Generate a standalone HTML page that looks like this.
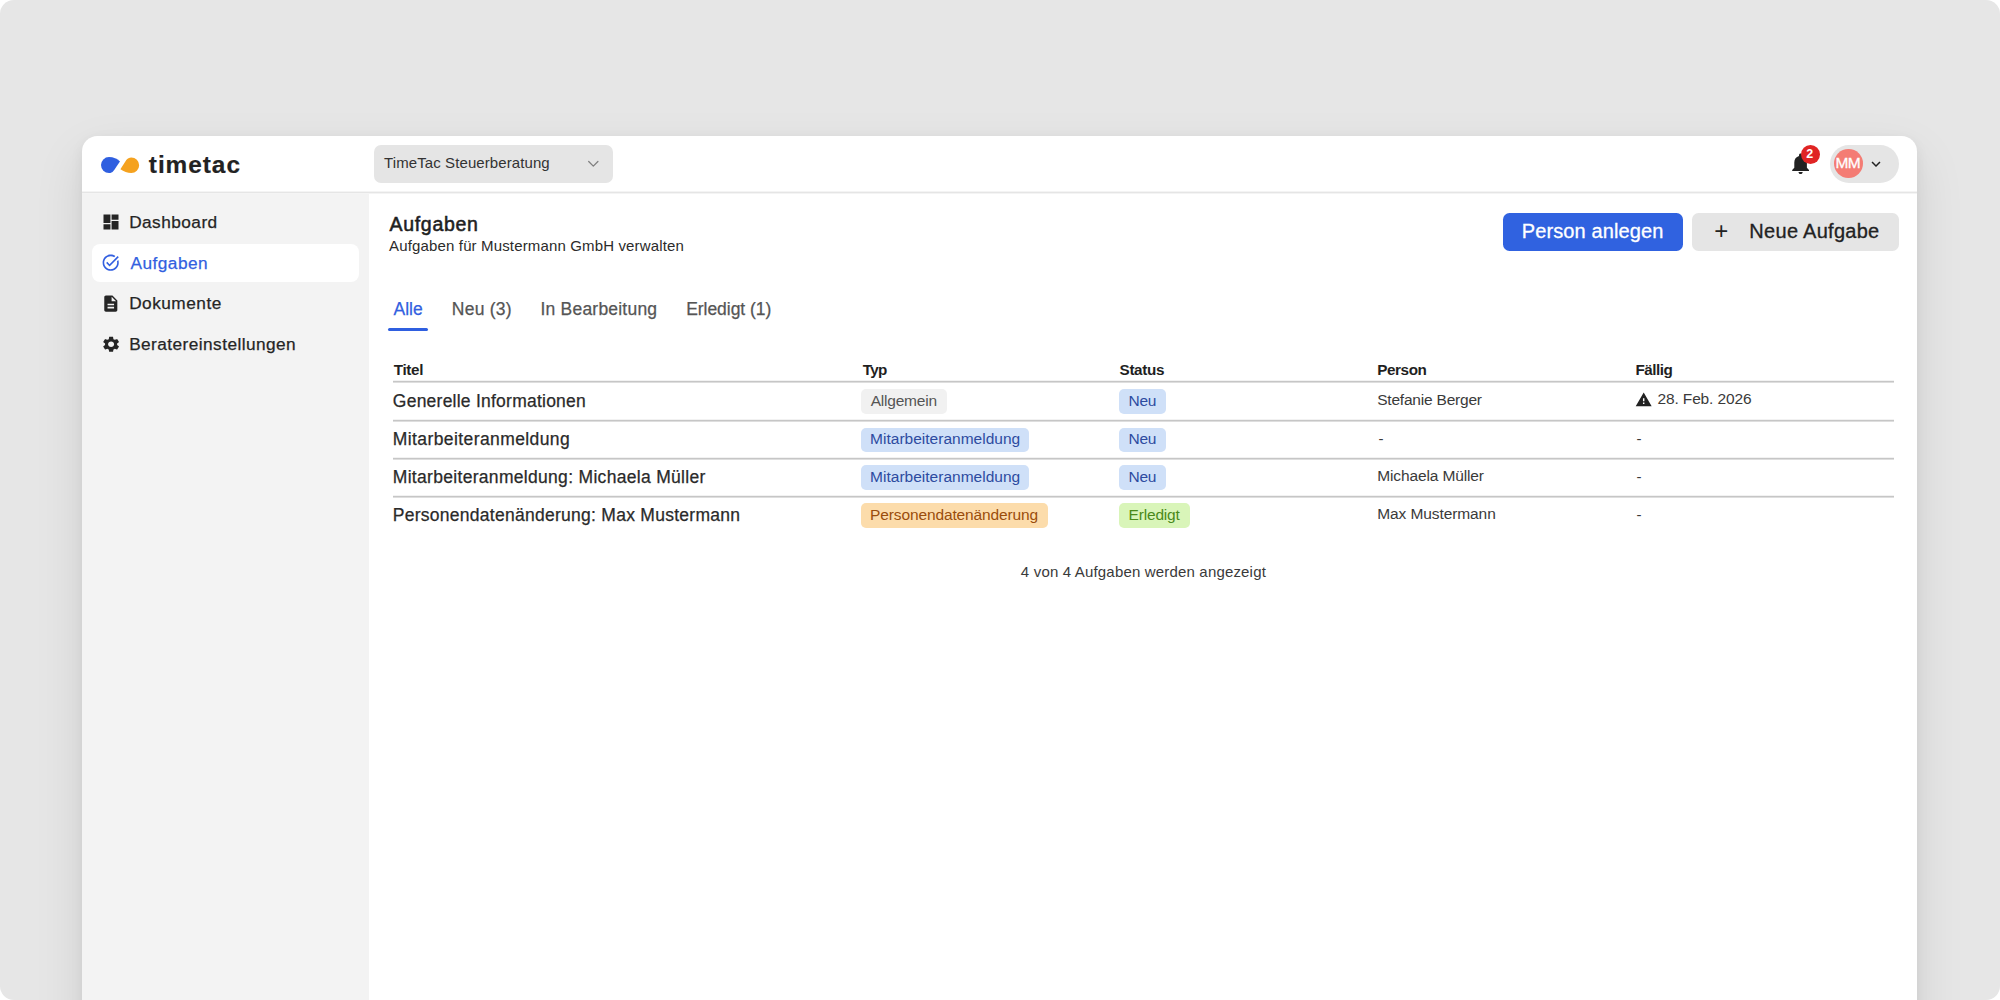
<!DOCTYPE html>
<html lang="de"><head><meta charset="utf-8"><title>Aufgaben</title>
<style>
html,body{margin:0;padding:0}
body{width:2000px;height:1000px;overflow:hidden;background:#fff;font-family:'Liberation Sans', sans-serif;position:relative}
.a{position:absolute}
.t{position:absolute;white-space:pre;line-height:1}
#win{position:absolute;left:81.8px;top:135.8px;width:1835.4px;height:900px;background:#fff;border-radius:15.5px;box-shadow:0 20px 50px rgba(0,0,0,.10),0 4px 14px rgba(0,0,0,.06);overflow:hidden}
#side{position:absolute;left:0;top:57.2px;width:286.9px;height:900px;background:#f3f3f3}
#hline{position:absolute;left:0;top:56.2px;width:1836px;height:1px;background:#e5e5e5;box-shadow:0 1px 0 #f4f4f4,0 -1px 0 #f4f4f4;z-index:1}
.hl{position:absolute;left:393px;width:1500.5px;height:1px;background:#c6c6c6;box-shadow:0 1px 0 #dedede,0 -1px 0 #f2f2f2}
.b{position:absolute;border-radius:5px}
</style></head><body>
<div class="a" style="left:0;top:0;width:2000px;height:1000px;background:#e6e6e6;border-radius:14px"></div>
<div id="win"><div id="hline"></div><div id="side"></div></div>
<!-- logo -->
<svg class="a" style="left:98px;top:154px" width="46" height="22" viewBox="98 154 46 22">
<path fill="#2f5fe0" d="M109 157.1 C113.5 157.1 117 159 120 161.4 C117.6 165 115.4 168.2 113.4 170.9 C112.3 172.3 110.8 173.1 109 173.1 A8 8 0 0 1 109 157.1Z"/>
<path fill="#f5a21f" d="M131.3 173.1 C127.4 173.1 123.8 171.6 120.4 169.3 C122.6 165.8 124.4 162.8 126.3 160 C127.5 158.3 129.2 157.4 131.3 157.4 A7.85 7.85 0 0 1 131.3 173.1Z"/>
</svg>
<!-- header dropdown -->
<div class="a" style="left:374px;top:145px;width:238.5px;height:38px;background:#e5e5e5;border-radius:7px"></div>
<svg class="a" style="left:586px;top:158px" width="14" height="12" viewBox="0 0 14 12"><polyline points="2.7,3.5 7.3,8.1 11.9,3.5" fill="none" stroke="#808080" stroke-width="1.3" stroke-linecap="round" stroke-linejoin="round"/></svg>
<!-- user pill -->
<div class="a" style="left:1829.5px;top:144.6px;width:69px;height:38.3px;background:#e5e5e5;border-radius:19.2px"></div>
<div class="a" style="left:1834.2px;top:149.1px;width:28.8px;height:28.8px;background:#f47c74;border-radius:50%"></div>
<div class="a" style="left:1800.9px;top:144.5px;width:19.2px;height:19.2px;background:#e02424;border-radius:50%;z-index:2"></div>
<!-- nav active -->
<div class="a" style="left:91.5px;top:244px;width:267.5px;height:38px;background:#fff;border-radius:8px"></div>
<!-- buttons -->
<div class="a" style="left:1503px;top:212.5px;width:179.5px;height:38.5px;background:#3062e0;border-radius:6.5px"></div>
<div class="a" style="left:1692px;top:212.5px;width:206.5px;height:38.5px;background:#e5e5e5;border-radius:6.5px"></div>
<!-- tab underline -->
<div class="a" style="left:388px;top:328.3px;width:40px;height:2.8px;background:#2f5fe0;border-radius:1.5px"></div>
<!-- table lines -->
<div class="hl" style="top:381px"></div>
<div class="hl" style="top:420px"></div>
<div class="hl" style="top:457.6px"></div>
<div class="hl" style="top:496px"></div>
<!-- badges -->
<div class="b" style="left:861px;top:389.4px;width:86px;height:24.6px;background:#f1f1f1"></div>
<div class="b" style="left:861px;top:427.5px;width:168.2px;height:24.6px;background:#cfe0f8"></div>
<div class="b" style="left:861px;top:465.2px;width:168.2px;height:24.6px;background:#cfe0f8"></div>
<div class="b" style="left:861px;top:503.1px;width:186.6px;height:24.6px;background:#fcdcab"></div>
<div class="b" style="left:1119.2px;top:389.4px;width:46.8px;height:24.6px;background:#cfe0f8"></div>
<div class="b" style="left:1119.2px;top:427.5px;width:46.8px;height:24.6px;background:#cfe0f8"></div>
<div class="b" style="left:1119.2px;top:465.2px;width:46.8px;height:24.6px;background:#cfe0f8"></div>
<div class="b" style="left:1119.2px;top:503.1px;width:70.8px;height:24.6px;background:#d9f5b9"></div>
<svg class="a" style="left:100.7px;top:211.9px" width="20" height="20" viewBox="0 0 24 24" preserveAspectRatio="none"><path fill="#252525" d="M3 13.3h8.3V3H3v10.3zm0 7.7h8.3v-6.3H3V21zm9.7 0H21V10.7h-8.3V21zm0-18v6.3H21V3h-8.3z"/></svg>
<svg class="a" style="left:101.3px;top:253.3px" width="19.4" height="19.4" viewBox="0 0 24 24" preserveAspectRatio="none"><path fill="#325fe0" d="M22 5.18L10.59 16.6l-4.24-4.24 1.41-1.41 2.83 2.83 10-10L22 5.18zm-2.21 5.04c.13.57.21 1.17.21 1.78 0 4.42-3.58 8-8 8s-8-3.58-8-8 3.58-8 8-8c1.58 0 3.04.46 4.28 1.25l1.44-1.44C16.1 2.67 14.13 2 12 2 6.48 2 2 6.48 2 12s4.48 10 10 10 10-4.48 10-10c0-1.19-.22-2.33-.6-3.39l-1.61 1.61z"/></svg>
<svg class="a" style="left:100.8px;top:293.7px" width="19.6" height="19.3" viewBox="0 0 24 24" preserveAspectRatio="none"><path fill="#252525" d="M14 2H6c-1.1 0-1.99.9-1.99 2L4 20c0 1.1.89 2 1.99 2H18c1.1 0 2-.9 2-2V8l-6-6zm2 16H8v-2h8v2zm0-4H8v-2h8v2zm-3-5V3.5L18.5 9H13z"/></svg>
<svg class="a" style="left:100.6px;top:335.3px" width="20.2" height="18.6" viewBox="0 0 24 24" preserveAspectRatio="none"><path fill="#252525" d="M19.14 12.94c.04-.3.06-.61.06-.94 0-.32-.02-.64-.07-.94l2.03-1.58c.18-.14.23-.41.12-.61l-1.92-3.32c-.12-.22-.37-.29-.59-.22l-2.39.96c-.5-.38-1.03-.7-1.62-.94l-.36-2.54c-.04-.24-.24-.41-.48-.41h-3.84c-.24 0-.43.17-.47.41l-.36 2.54c-.59.24-1.13.57-1.62.94l-2.39-.96c-.22-.08-.47 0-.59.22L2.74 8.87c-.12.21-.08.47.12.61l2.03 1.58c-.05.3-.09.63-.09.94s.02.64.07.94l-2.03 1.58c-.18.14-.23.41-.12.61l1.92 3.32c.12.22.37.29.59.22l2.39-.96c.5.38 1.03.7 1.62.94l.36 2.54c.05.24.24.41.48.41h3.84c.24 0 .44-.17.47-.41l.36-2.54c.59-.24 1.13-.56 1.62-.94l2.39.96c.22.08.47 0 .59-.22l1.92-3.32c.12-.22.07-.47-.12-.61l-2.01-1.58zM12 15.6c-1.98 0-3.6-1.62-3.6-3.6s1.62-3.6 3.6-3.6 3.6 1.62 3.6 3.6-1.62 3.6-3.6 3.6z"/></svg>
<svg class="a" style="left:1787.7px;top:151.1px" width="25.2" height="25.2" viewBox="0 0 24 24" preserveAspectRatio="none"><path fill="#222" d="M12 22c1.1 0 2-.9 2-2h-4c0 1.1.89 2 2 2zm6-6v-5c0-3.07-1.64-5.64-4.5-6.32V4c0-.83-.67-1.5-1.5-1.5s-1.5.67-1.5 1.5v.68C7.63 5.36 6 7.92 6 11v5l-2 2v1h16v-1l-2-2z"/></svg>
<svg class="a" style="left:1635.1px;top:391.3px" width="17.4" height="17.4" viewBox="0 0 24 24" preserveAspectRatio="none"><path fill="#222" d="M1 21h22L12 2 1 21zm12-3h-2v-2h2v2zm0-4h-2v-4h2v4z"/></svg>
<svg class="a" style="left:1866.5px;top:154.5px" width="18" height="18" viewBox="0 0 24 24" preserveAspectRatio="none"><path fill="#222" d="M7.41 8.59L12 13.17l4.59-4.58L18 10l-6 6-6-6 1.41-1.41z"/></svg>
<div style="position:absolute;left:0;top:0;z-index:3">
<div class="t" style="left:148.81px;top:153.30px;font-size:24.4px;font-weight:700;color:#222;letter-spacing:0.958px;-webkit-text-stroke:0.2px;">timetac</div>
<div class="t" style="left:384.05px;top:155.30px;font-size:15px;font-weight:400;color:#333;letter-spacing:0.094px;">TimeTac Steuerberatung</div>
<div class="t" style="left:1835.43px;top:155.30px;font-size:15.5px;font-weight:400;color:#fff;letter-spacing:-0.507px;-webkit-text-stroke:0.3px;">MM</div>
<div class="t" style="left:1806.30px;top:148.30px;font-size:12.5px;font-weight:700;color:#fff;letter-spacing:0.000px;">2</div>
<div class="t" style="left:129.13px;top:214.30px;font-size:17.25px;font-weight:400;color:#252525;letter-spacing:0.461px;-webkit-text-stroke:0.25px;">Dashboard</div>
<div class="t" style="left:130.58px;top:255.30px;font-size:17.25px;font-weight:400;color:#325fe0;letter-spacing:0.449px;-webkit-text-stroke:0.25px;">Aufgaben</div>
<div class="t" style="left:129.13px;top:295.30px;font-size:17.25px;font-weight:400;color:#252525;letter-spacing:0.492px;-webkit-text-stroke:0.25px;">Dokumente</div>
<div class="t" style="left:129.13px;top:336.30px;font-size:17.25px;font-weight:400;color:#252525;letter-spacing:0.438px;-webkit-text-stroke:0.25px;">Beratereinstellungen</div>
<div class="t" style="left:389.41px;top:215.30px;font-size:19.5px;font-weight:400;color:#1f1f1f;letter-spacing:0.718px;-webkit-text-stroke:0.55px;">Aufgaben</div>
<div class="t" style="left:389.11px;top:238.30px;font-size:15px;font-weight:400;color:#2b2b2b;letter-spacing:0.146px;">Aufgaben für Mustermann GmbH verwalten</div>
<div class="t" style="left:1521.72px;top:221.30px;font-size:20px;font-weight:400;color:#fff;letter-spacing:0.115px;-webkit-text-stroke:0.3px;">Person anlegen</div>
<div class="t" style="left:1714.36px;top:219.30px;font-size:24px;font-weight:400;color:#222;letter-spacing:0.000px;">+</div>
<div class="t" style="left:1749.37px;top:221.30px;font-size:20px;font-weight:400;color:#222;letter-spacing:0.282px;-webkit-text-stroke:0.3px;">Neue Aufgabe</div>
<div class="t" style="left:393.53px;top:301.30px;font-size:17.5px;font-weight:400;color:#325fe0;letter-spacing:-0.018px;-webkit-text-stroke:0.25px;">Alle</div>
<div class="t" style="left:451.79px;top:301.30px;font-size:17.5px;font-weight:400;color:#555;letter-spacing:0.249px;-webkit-text-stroke:0.25px;">Neu (3)</div>
<div class="t" style="left:540.49px;top:301.30px;font-size:17.5px;font-weight:400;color:#555;letter-spacing:0.211px;-webkit-text-stroke:0.25px;">In Bearbeitung</div>
<div class="t" style="left:686.18px;top:301.30px;font-size:17.5px;font-weight:400;color:#555;letter-spacing:-0.047px;-webkit-text-stroke:0.25px;">Erledigt (1)</div>
<div class="t" style="left:393.68px;top:362.30px;font-size:15.25px;font-weight:700;color:#1f1f1f;letter-spacing:-0.309px;">Titel</div>
<div class="t" style="left:862.68px;top:362.30px;font-size:15.25px;font-weight:700;color:#1f1f1f;letter-spacing:-0.614px;">Typ</div>
<div class="t" style="left:1119.55px;top:362.30px;font-size:15.25px;font-weight:700;color:#1f1f1f;letter-spacing:-0.340px;">Status</div>
<div class="t" style="left:1377.21px;top:362.30px;font-size:15.25px;font-weight:700;color:#1f1f1f;letter-spacing:-0.409px;">Person</div>
<div class="t" style="left:1635.38px;top:362.30px;font-size:15.25px;font-weight:700;color:#1f1f1f;letter-spacing:-0.453px;">Fällig</div>
<div class="t" style="left:392.84px;top:393.30px;font-size:17.5px;font-weight:400;color:#2a2a2a;letter-spacing:0.236px;-webkit-text-stroke:0.25px;">Generelle Informationen</div>
<div class="t" style="left:392.79px;top:431.30px;font-size:17.5px;font-weight:400;color:#2a2a2a;letter-spacing:0.404px;-webkit-text-stroke:0.25px;">Mitarbeiteranmeldung</div>
<div class="t" style="left:392.79px;top:469.30px;font-size:17.5px;font-weight:400;color:#2a2a2a;letter-spacing:0.306px;-webkit-text-stroke:0.25px;">Mitarbeiteranmeldung: Michaela Müller</div>
<div class="t" style="left:392.79px;top:507.30px;font-size:17.5px;font-weight:400;color:#2a2a2a;letter-spacing:0.267px;-webkit-text-stroke:0.25px;">Personendatenänderung: Max Mustermann</div>
<div class="t" style="left:870.71px;top:393.30px;font-size:15.5px;font-weight:400;color:#555;letter-spacing:-0.212px;">Allgemein</div>
<div class="t" style="left:870.11px;top:431.30px;font-size:15.5px;font-weight:400;color:#2d4ba0;letter-spacing:0.009px;">Mitarbeiteranmeldung</div>
<div class="t" style="left:870.11px;top:469.30px;font-size:15.5px;font-weight:400;color:#2d4ba0;letter-spacing:0.009px;">Mitarbeiteranmeldung</div>
<div class="t" style="left:870.11px;top:507.30px;font-size:15.5px;font-weight:400;color:#9a4d0c;letter-spacing:-0.128px;">Personendatenänderung</div>
<div class="t" style="left:1128.60px;top:393.30px;font-size:15.5px;font-weight:400;color:#2d4ba0;letter-spacing:-0.285px;">Neu</div>
<div class="t" style="left:1128.60px;top:431.30px;font-size:15.5px;font-weight:400;color:#2d4ba0;letter-spacing:-0.285px;">Neu</div>
<div class="t" style="left:1128.60px;top:469.30px;font-size:15.5px;font-weight:400;color:#2d4ba0;letter-spacing:-0.285px;">Neu</div>
<div class="t" style="left:1128.60px;top:507.30px;font-size:15.5px;font-weight:400;color:#4a8a1a;letter-spacing:-0.191px;">Erledigt</div>
<div class="t" style="left:1377.19px;top:392.30px;font-size:15.5px;font-weight:400;color:#3a3a3a;letter-spacing:-0.208px;">Stefanie Berger</div>
<div class="t" style="left:1378.54px;top:431.30px;font-size:15px;font-weight:400;color:#3a3a3a;letter-spacing:0.000px;">-</div>
<div class="t" style="left:1377.20px;top:468.30px;font-size:15.5px;font-weight:400;color:#3a3a3a;letter-spacing:-0.125px;">Michaela Müller</div>
<div class="t" style="left:1377.20px;top:506.30px;font-size:15.5px;font-weight:400;color:#3a3a3a;letter-spacing:-0.088px;">Max Mustermann</div>
<div class="t" style="left:1657.49px;top:391.30px;font-size:15.5px;font-weight:400;color:#3a3a3a;letter-spacing:-0.134px;">28. Feb. 2026</div>
<div class="t" style="left:1636.54px;top:431.30px;font-size:15px;font-weight:400;color:#3a3a3a;letter-spacing:0.000px;">-</div>
<div class="t" style="left:1636.54px;top:469.30px;font-size:15px;font-weight:400;color:#3a3a3a;letter-spacing:0.000px;">-</div>
<div class="t" style="left:1636.54px;top:507.30px;font-size:15px;font-weight:400;color:#3a3a3a;letter-spacing:0.000px;">-</div>
<div class="t" style="left:1020.86px;top:564.30px;font-size:15px;font-weight:400;color:#3a3a3a;letter-spacing:0.175px;">4 von 4 Aufgaben werden angezeigt</div>
</div>
</body></html>
